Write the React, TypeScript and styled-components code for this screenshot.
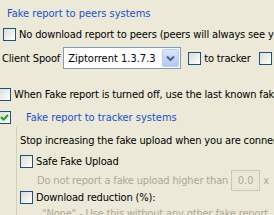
import React from "react";
import styled, { createGlobalStyle } from "styled-components";

const GlobalStyle = createGlobalStyle`
  html, body { margin: 0; padding: 0; background: #ECE9D8; }
  body {
    font-family: "DejaVu Sans Condensed", "DejaVu Sans", "Liberation Sans", sans-serif;
    font-stretch: condensed;
    font-size: 11px;
    color: #000;
  }
`;

const Page = styled.div`
  width: 274px;
  height: 215px;
  overflow: hidden;
  display: flex;
  flex-direction: column;
  white-space: nowrap;
  background: #ECE9D8;
`;

const Row = styled.div<{ $h: number; $mt?: number; $pl?: number; $gap?: number }>`
  display: flex;
  align-items: center;
  flex: none;
  height: ${(p) => p.$h}px;
  margin-top: ${(p) => p.$mt ?? 0}px;
  margin-left: ${(p) => p.$pl ?? 0}px;
  gap: ${(p) => p.$gap ?? 3}px;
`;

const GroupTitle = styled.span`
  color: #2150CF;
`;

const Label = styled.span<{ $disabled?: boolean }>`
  color: ${(p) => (p.$disabled ? "#ACA899" : "#000")};
  letter-spacing: -0.15px;
`;

const Box = styled.span`
  flex: none;
  box-sizing: border-box;
  width: 13px;
  height: 13px;
  border: 1px solid #1C5180;
  background: linear-gradient(135deg, #DCDCD7 0%, #F4F4F0 70%, #FFFFFF 100%);
  display: flex;
  align-items: center;
  justify-content: center;
`;

const Check: React.FC<{ checked?: boolean }> = ({ checked }) => (
  <Box>
    {checked && (
      <svg width="11" height="11" viewBox="0 0 11 11">
        <polyline points="2,5 4.5,7.5 9,3" fill="none" stroke="#21A121" strokeWidth="2" />
      </svg>
    )}
  </Box>
);

const Combo = styled.div`
  flex: none;
  box-sizing: border-box;
  width: 118px;
  height: 22px;
  border: 1px solid #7F9DB9;
  background: #fff;
  display: flex;
  align-items: center;
  justify-content: space-between;
  padding: 1px;
`;

const ComboText = styled.span`
  padding-left: 3px;
`;

const ComboButton = styled.span`
  box-sizing: border-box;
  width: 17px;
  height: 18px;
  border: 1px solid #B9CBF3;
  border-radius: 2px;
  background: linear-gradient(180deg, #DCE6FD 0%, #C1D3FB 60%, #B4C8F6 100%);
  display: flex;
  align-items: center;
  justify-content: center;
`;

const Spacer = styled.span<{ $w: number }>`
  flex: none;
  width: ${(p) => p.$w}px;
`;

const GroupBody = styled.div`
  margin-left: 16px;
  border-left: 1px solid #D0D0BF;
  padding-left: 3px;
  padding-top: 3px;
  display: flex;
  flex-direction: column;
`;

const NumBox = styled.span`
  flex: none;
  box-sizing: border-box;
  width: 29px;
  height: 21px;
  border: 1px solid #C9C7BA;
  outline: 1px solid #E4E2D6;
  outline-offset: -3px;
  color: #ACA899;
  display: flex;
  align-items: center;
  justify-content: center;
`;

export default function App() {
  return (
    <>
      <GlobalStyle />
      <Page>
        <Row $h={26} $pl={7}>
          <GroupTitle>Fake report to peers systems</GroupTitle>
        </Row>
        <Row $h={16} $pl={3}>
          <Check />
          <Label>No download report to peers (peers will always see you</Label>
        </Row>
        <Row $h={24} $mt={4} $pl={2} $gap={0}>
          <Label>Client Spoof</Label>
          <Spacer $w={3} />
          <Combo>
            <ComboText>Ziptorrent 1.3.7.3</ComboText>
            <ComboButton>
              <svg width="9" height="7" viewBox="0 0 9 7">
                <polyline points="1,1.5 4.5,5 8,1.5" fill="none" stroke="#4D6185" strokeWidth="2" />
              </svg>
            </ComboButton>
          </Combo>
          <Spacer $w={7} />
          <Check />
          <Spacer $w={3} />
          <Label>to tracker</Label>
          <Spacer $w={8} />
          <Check />
          <Spacer $w={3} />
          <Label>to peers</Label>
        </Row>
        <Row $h={20} $mt={14} $pl={-2}>
          <Check />
          <Label>When Fake report is turned off, use the last known fake</Label>
        </Row>
        <Row $h={20} $mt={3} $pl={-2} $gap={15}>
          <Check checked />
          <GroupTitle>Fake report to tracker systems</GroupTitle>
        </Row>
        <GroupBody>
          <Row $h={20}>
            <Label>Stop increasing the fake upload when you are connected</Label>
          </Row>
          <Row $h={23} $gap={3}>
            <Check />
            <Label>Safe Fake Upload</Label>
          </Row>
          <Row $h={14} $pl={17} $gap={3}>
            <Label $disabled>Do not report a fake upload higher than</Label>
            <NumBox>0.0</NumBox>
            <Label $disabled>x</Label>
          </Row>
          <Row $h={20} $gap={3}>
            <Check />
            <Label>Download reduction (%):</Label>
          </Row>
          <Row $h={12} $pl={22}>
            <Label $disabled>"None" - Use this without any other fake report</Label>
          </Row>
        </GroupBody>
      </Page>
    </>
  );
}
